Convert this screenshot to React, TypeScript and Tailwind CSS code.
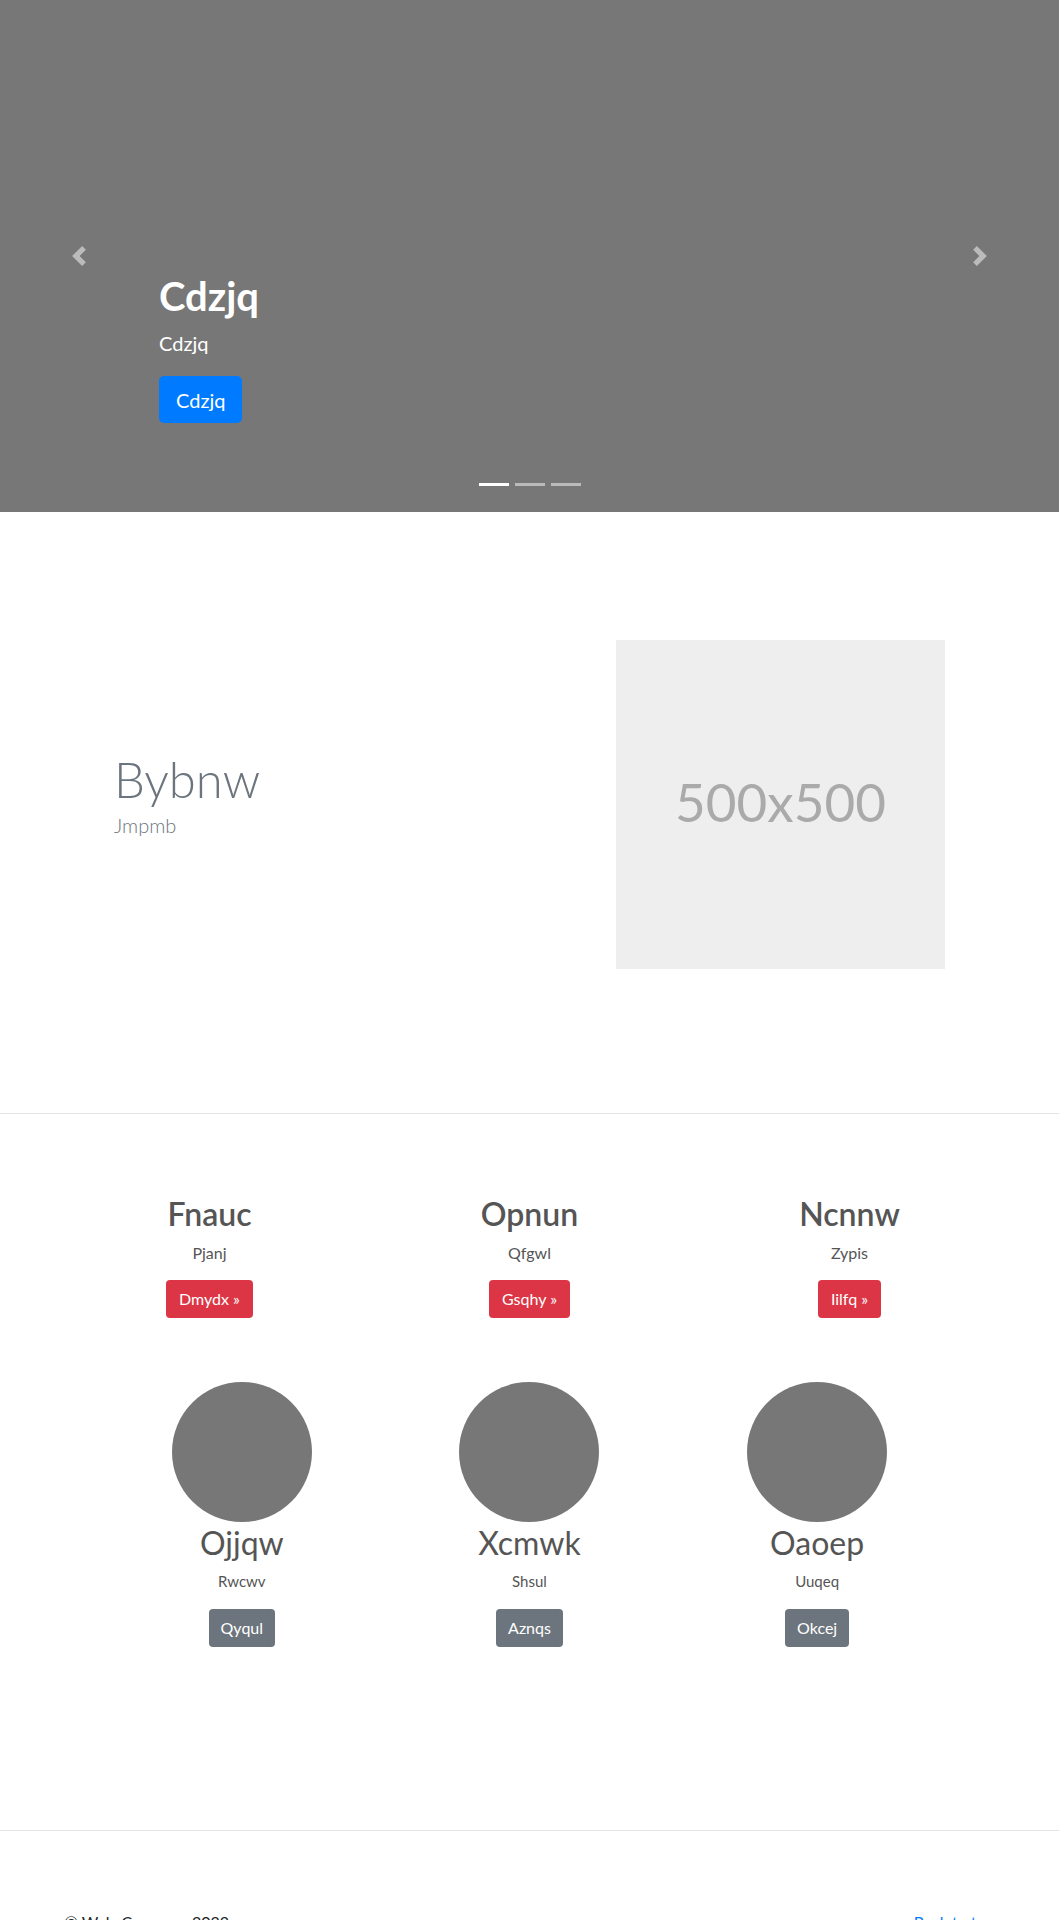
import React from "react";

const font = "font-['Lato',sans-serif]";

function Carousel() {
  return (
    <div className="relative h-[512px] bg-[#777] overflow-hidden">
      <div className="absolute left-0 top-0 h-full w-[15%] flex items-center justify-center opacity-50">
        <svg width="20" height="20" viewBox="0 0 8 8" fill="#fff">
          <path d="M5.25 0l-4 4 4 4 1.5-1.5-2.5-2.5 2.5-2.5-1.5-1.5z" />
        </svg>
      </div>
      <div className="absolute right-0 top-0 h-full w-[15%] flex items-center justify-center opacity-50">
        <svg width="20" height="20" viewBox="0 0 8 8" fill="#fff">
          <path d="M2.75 0l-1.5 1.5 2.5 2.5-2.5 2.5 1.5 1.5 4-4-4-4z" />
        </svg>
      </div>
      <div className="absolute left-[159px] top-[272px] text-white">
        <h1 className="text-[40px] font-bold leading-[1.2]">Cdzjq</h1>
        <p className="mt-[8px] text-[20px] leading-[30px]">Cdzjq</p>
        <button className="mt-[18px] h-[47px] px-[17px] rounded-[5px] bg-[#007bff] text-white text-[20px] leading-[30px]">
          Cdzjq
        </button>
      </div>
      <div className="absolute bottom-[26px] left-1/2 -translate-x-1/2 flex gap-[6px]">
        <span className="block w-[30px] h-[3px] bg-white" />
        <span className="block w-[30px] h-[3px] bg-white opacity-50" />
        <span className="block w-[30px] h-[3px] bg-white opacity-50" />
      </div>
    </div>
  );
}

function Feature() {
  return (
    <section className="flex justify-between pt-[128px] pb-[144px] pl-[114px] pr-[114px]">
      <div className="pt-[110px]">
        <h1 className="text-[49px] font-light leading-[1.2] text-[#6c757d]">Bybnw</h1>
        <p className="mt-[3px] text-[20px] font-light leading-[26px] text-[#6c757d]">Jmpmb</p>
      </div>
      <div className="w-[329px] h-[329px] bg-[#eee] flex items-center justify-center pb-[6px] text-[#aaa] text-[53px]">
        500x500
      </div>
    </section>
  );
}

const row1 = [
  { h: "Fnauc", p: "Pjanj", b: "Dmydx »" },
  { h: "Opnun", p: "Qfgwl", b: "Gsqhy »" },
  { h: "Ncnnw", p: "Zypis", b: "Iilfq »" },
];

const row2 = [
  { h: "Ojjqw", p: "Rwcwv", b: "Qyqul" },
  { h: "Xcmwk", p: "Shsul", b: "Aznqs" },
  { h: "Oaoep", p: "Uuqeq", b: "Okcej" },
];

function Columns() {
  return (
    <section className="border-t border-[#e5e5e5] pt-[81px] pb-[183px]">
      <div className="w-[960px] mx-auto grid grid-cols-3 text-center">
        {row1.map((c) => (
          <div key={c.h} className="flex flex-col items-center">
            <h2 className="text-[32px] font-semibold leading-[1.2] text-[#555]">{c.h}</h2>
            <p className="mt-[8px] text-[16px] leading-[24px] text-[#555]">{c.p}</p>
            <button className="mt-[15px] h-[38px] px-[13px] rounded-[4px] bg-[#dc3545] text-white text-[16px] leading-[24px]">
              {c.b}
            </button>
          </div>
        ))}
      </div>
      <div className="w-[863px] mx-auto grid grid-cols-3 text-center mt-[64px]">
        {row2.map((c) => (
          <div key={c.h} className="flex flex-col items-center">
            <div className="w-[140px] h-[140px] rounded-full bg-[#777]" />
            <h2 className="mt-[2px] text-[32px] font-normal leading-[1.2] text-[#555]">{c.h}</h2>
            <p className="mt-[8px] text-[15px] leading-[21px] text-[#555]">{c.p}</p>
            <button className="mt-[17px] h-[38px] px-[12px] rounded-[4px] bg-[#6c757d] text-white text-[16px] leading-[24px]">
              {c.b}
            </button>
          </div>
        ))}
      </div>
    </section>
  );
}

function Footer() {
  return (
    <footer className="border-t border-[#e5e5e5] pt-[79px] pb-[40px]">
      <div className="w-[960px] mx-auto px-[15px] flex justify-between text-[16px] leading-[24px]">
        <p className="text-[#212529]">© WebsCompany 2022</p>
        <a href="#" className="text-[#007bff]">Back to top</a>
      </div>
    </footer>
  );
}

export default function App() {
  return (
    <div className={`${font} bg-white`}>
      <Carousel />
      <Feature />
      <Columns />
      <Footer />
    </div>
  );
}
